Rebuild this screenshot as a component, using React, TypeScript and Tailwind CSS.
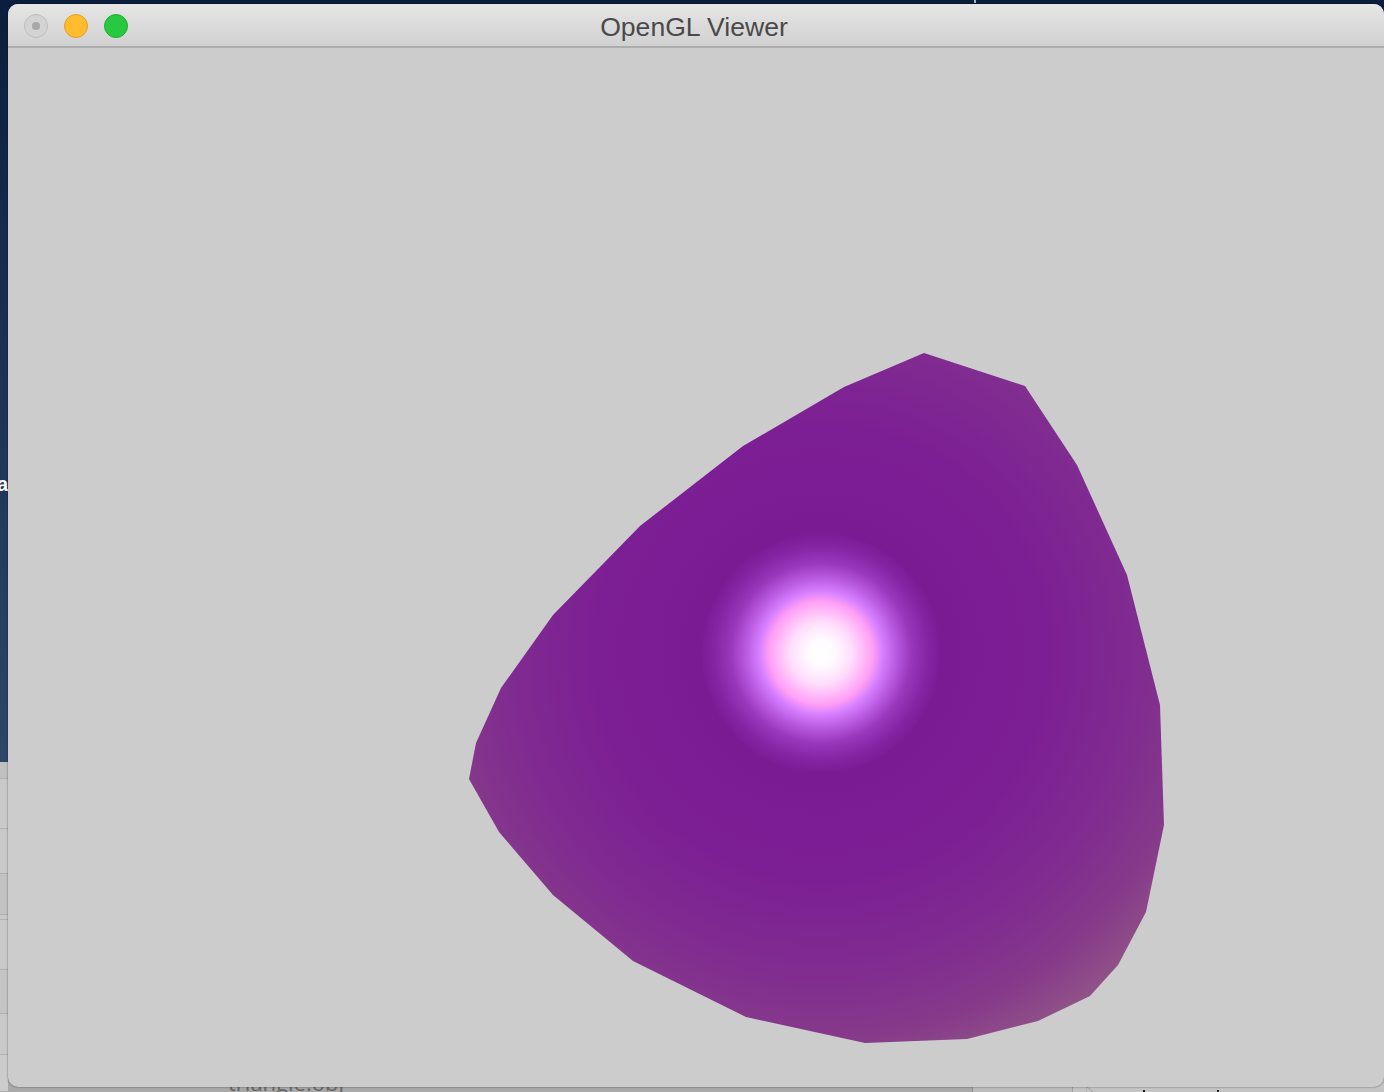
const shape =
  "924,353 1025,386 1077,465 1127,575 1160,705 1164,825 1146,912 1118,965 1090,996 1038,1021 967,1039 865,1043 746,1017 633,961 553,895 499,832 469,779 476,743 501,688 553,615 640,526 743,446 844,387";

// rows of the app behind the window, only 8px of them shows on the left
const sideRows = [
  { h: "h-[17px]", bg: "bg-[#c0c0c0]" },
  { h: "h-[50px]", bg: "bg-[#c9c9c9]" },
  { h: "h-[45px]", bg: "bg-[#c9c9c9]" },
  { h: "h-[41px]", bg: "bg-[#c2c2c2]" },
  { h: "h-[5px]", bg: "bg-[#c9c9c9]" },
  { h: "h-[50px]", bg: "bg-[#c9c9c9]" },
  { h: "h-[44px]", bg: "bg-[#c4c4c4]" },
  { h: "h-[41px]", bg: "bg-[#c9c9c9]" },
  { h: "h-[37px]", bg: "bg-[#cccccc]" },
];

const Viewer = () => (
  <svg viewBox="8 48 1376 1039" className="block w-full h-full">
    <defs>
      <radialGradient id="lit" gradientUnits="userSpaceOnUse" cx="821" cy="653" r="450">
        <stop offset="0" stopColor="#ffffff" />
        <stop offset="0.03" stopColor="#fffbff" />
        <stop offset="0.07" stopColor="#ffdcfb" />
        <stop offset="0.115" stopColor="#ff9ff6" />
        <stop offset="0.138" stopColor="#d67eff" />
        <stop offset="0.167" stopColor="#b95ae0" />
        <stop offset="0.2" stopColor="#9a38bc" />
        <stop offset="0.233" stopColor="#8726a6" />
        <stop offset="0.267" stopColor="#7b1b94" />
        <stop offset="0.49" stopColor="#7c1e94" />
        <stop offset="0.71" stopColor="#802c90" />
        <stop offset="0.855" stopColor="#863a8a" />
        <stop offset="0.955" stopColor="#8f5088" />
        <stop offset="1" stopColor="#925886" />
      </radialGradient>
    </defs>
    <polygon points={shape} fill="url(#lit)" />
  </svg>
);

export default function App() {
  return (
    <div className="relative w-[1384px] h-[1092px] overflow-hidden font-['Liberation_Sans',sans-serif]">
      <div className="h-[762px] bg-gradient-to-b from-[#0b1e3d] via-[#1c3357] to-[#2d4669] relative">
        <span className="absolute left-[-3px] top-[472px] text-[20px] font-bold text-white leading-6">a</span>
        <span className="absolute left-[974px] top-0 w-[2px] h-[3px] bg-[#aab4c4]"></span>
      </div>

      <div className="flex h-[330px] bg-[#a9a9a9]">
        <div className="w-2 flex flex-col shrink-0">
          {sideRows.map((r, i) => (
            <div key={i} className={`${r.h} ${r.bg} border-b border-[#b0b0b0]`}></div>
          ))}
        </div>
        <div className="w-[964px] flex items-end pl-[220px]">
          <span className="text-[22px] leading-[24px] mb-[-2px] text-[#666666] font-['Open_Sans',sans-serif]">triangle.obj</span>
        </div>
        <div className="w-[100px] bg-[#bcbcbc] border-l border-[#8e8e8e]"></div>
        <div className="flex-1 bg-[#c4c4c4] border-l border-[#a0a0a0] relative">
          <svg width="8" height="6" viewBox="0 0 8 6" className="absolute left-[13px] bottom-0">
            <path d="M0 0 V6 M0 0 L7 6" stroke="#a0a0a0" fill="none" />
          </svg>
          <span className="absolute left-[70px] bottom-0 w-[2px] h-[2px] bg-[#222222]"></span>
          <span className="absolute left-[144px] bottom-0 w-[2px] h-[2px] bg-[#222222]"></span>
        </div>
      </div>

      {/* viewer window */}
      <div className="absolute left-2 top-1 w-[1376px] h-[1083px] rounded-[10px] overflow-hidden bg-[#cccccc] flex flex-col shadow-[0_0_2px_rgba(0,0,0,0.55)]">
        <div className="h-11 shrink-0 flex items-center relative bg-gradient-to-b from-[#e6e6e6] to-[#d1d1d1] border-b-2 border-[#adadad]">
          <div className="flex items-center gap-4 pl-4 pt-[2px]">
            <div className="w-6 h-6 rounded-full border border-[#bcbcbc] bg-[#d3d3d3] flex items-center justify-center">
              <div className="w-2 h-2 rounded-full bg-[#a8a8a8]"></div>
            </div>
            <div className="w-6 h-6 rounded-full border border-[#dfa023] bg-[#febc2e]"></div>
            <div className="w-6 h-6 rounded-full border border-[#1dad2b] bg-[#28c840]"></div>
          </div>
          <div className="absolute inset-x-0 top-[5px] text-center text-[26.6px] leading-9 text-[#4a4a4a] pr-1">OpenGL Viewer</div>
        </div>
        <div className="flex-1 min-h-0">
          <Viewer />
        </div>
      </div>
    </div>
  );
}
